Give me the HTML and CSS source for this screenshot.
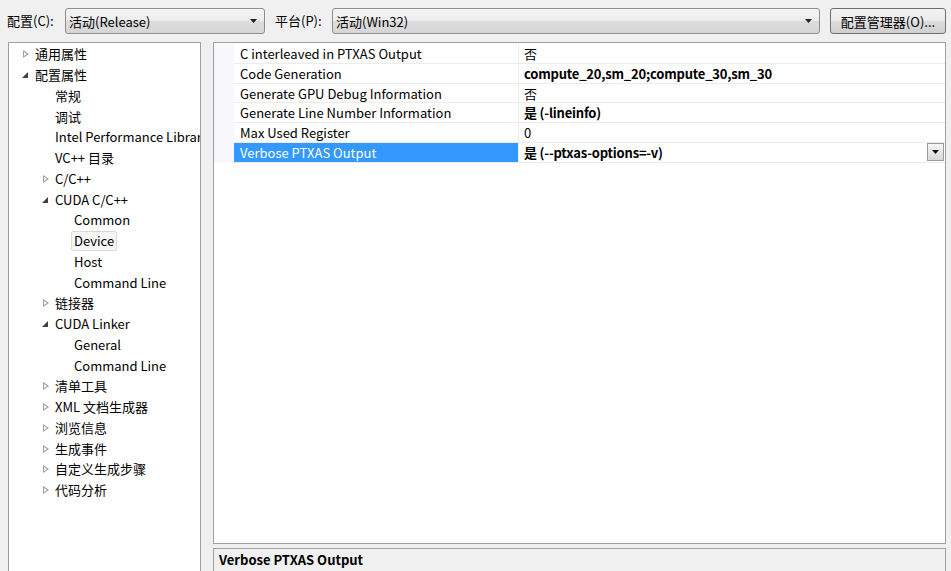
FILE: index.html
```html
<!DOCTYPE html>
<html lang="zh-CN">
<head>
<meta charset="utf-8">
<title>属性页</title>
<link rel="stylesheet" href="styles.css">
</head>
<body>
<div class="page">
  <div class="topbar">
    <span class="lbl lbl-cfg">配置(C):</span>
    <div class="combo combo-cfg"><span class="combo-text">活动(Release)</span><span class="combo-arrow"><svg width="7" height="4" viewBox="0 0 7 4"><path d="M0 0H7L3.5 4Z" fill="#222"/></svg></span></div>
    <span class="lbl lbl-plat">平台(P):</span>
    <div class="combo combo-plat"><span class="combo-text">活动(Win32)</span><span class="combo-arrow"><svg width="7" height="4" viewBox="0 0 7 4"><path d="M0 0H7L3.5 4Z" fill="#222"/></svg></span></div>
    <button class="btn">配置管理器(O)...</button>
  </div>
  <div class="main">
    <div class="tree">
      <div class="node l0"><span class="tw closed"></span>通用属性</div>
      <div class="node l0"><span class="tw open"></span>配置属性</div>
      <div class="node l1"><span class="tw"></span>常规</div>
      <div class="node l1"><span class="tw"></span>调试</div>
      <div class="node l1"><span class="tw"></span>Intel Performance Libraries</div>
      <div class="node l1"><span class="tw"></span>VC++ 目录</div>
      <div class="node l1"><span class="tw closed"></span>C/C++</div>
      <div class="node l1"><span class="tw open"></span>CUDA C/C++</div>
      <div class="node l2"><span class="tw"></span>Common</div>
      <div class="node l2"><span class="tw"></span><span class="sel">Device</span></div>
      <div class="node l2"><span class="tw"></span>Host</div>
      <div class="node l2"><span class="tw"></span>Command Line</div>
      <div class="node l1"><span class="tw closed"></span>链接器</div>
      <div class="node l1"><span class="tw open"></span>CUDA Linker</div>
      <div class="node l2"><span class="tw"></span>General</div>
      <div class="node l2"><span class="tw"></span>Command Line</div>
      <div class="node l1"><span class="tw closed"></span>清单工具</div>
      <div class="node l1"><span class="tw closed"></span>XML 文档生成器</div>
      <div class="node l1"><span class="tw closed"></span>浏览信息</div>
      <div class="node l1"><span class="tw closed"></span>生成事件</div>
      <div class="node l1"><span class="tw closed"></span>自定义生成步骤</div>
      <div class="node l1"><span class="tw closed"></span>代码分析</div>
    </div>
    <div class="right">
      <div class="grid">
        <div class="rows">
          <div class="row"><div class="gut"></div><div class="name">C interleaved in PTXAS Output</div><div class="val">否</div></div>
          <div class="row"><div class="gut"></div><div class="name">Code Generation</div><div class="val b">compute_20,sm_20;compute_30,sm_30</div></div>
          <div class="row"><div class="gut"></div><div class="name">Generate GPU Debug Information</div><div class="val">否</div></div>
          <div class="row"><div class="gut"></div><div class="name">Generate Line Number Information</div><div class="val b">是 (-lineinfo)</div></div>
          <div class="row"><div class="gut"></div><div class="name">Max Used Register</div><div class="val">0</div></div>
          <div class="row selrow"><div class="gut"></div><div class="name">Verbose PTXAS Output</div><div class="val b">是 (--ptxas-options=-v)<span class="dd"><svg width="7" height="4" viewBox="0 0 7 4"><path d="M0 0H7L3.5 4Z" fill="#111"/></svg></span></div></div>
        </div>
      </div>
      <div class="desc">Verbose PTXAS Output</div>
    </div>
  </div>
</div>
</body>
</html>
```
FILE: styles.css
```css
* { box-sizing: border-box; }
html, body { margin: 0; padding: 0; }
body {
  background: #f0f0f0;
  font-family: "Noto Sans CJK SC", "Noto Sans", sans-serif;
  font-size: 13px;
  color: #000;
  width: 951px;
  height: 571px;
  overflow: hidden;
}
.page { width: 951px; height: 571px; display: flex; flex-direction: column; }
.topbar {
  height: 42px;
  display: flex;
  align-items: flex-start;
  padding: 8px 0 0 7px;
}
.lbl { line-height: 25px; }
.lbl-cfg { width: 58px; }
.lbl-plat { width: 57px; margin-left: 10px; }
.combo {
  height: 26px;
  border: 1px solid #8e8f8f;
  border-radius: 3px;
  background: linear-gradient(#f4f4f4 0%, #ececec 48%, #dcdcdc 52%, #d6d6d6 100%);
  display: flex;
  align-items: center;
  padding-left: 3px;
}
.combo-cfg { width: 200px; }
.combo-plat { width: 488px; }
.combo-text { flex: 1; }
.combo-arrow { width: 18px; display: flex; align-items: center; justify-content: center; margin-right: 2px; }
.btn {
  margin-left: 10px;
  width: 116px;
  height: 26px;
  border: 1px solid #707070;
  border-radius: 3px;
  background: linear-gradient(#f2f2f2 0%, #ebebeb 48%, #dddddd 52%, #cfcfcf 100%);
  font-family: inherit;
  font-size: 13px;
  padding: 0;
  color: #000;
}
.main { flex: 1; display: flex; padding-left: 8px; min-height: 0; }
.tree {
  width: 193px;
  height: 540px;
  background: #fff;
  border: 1px solid #a0a0a0;
  border-bottom: none;
  padding-top: 1px;
  overflow: hidden;
  white-space: nowrap;
}
.node { height: 20.75px; line-height: 20px; display: flex; align-items: center; }
.l0 { padding-left: 10px; }
.l1 { padding-left: 30px; }
.l2 { padding-left: 49px; }
.tw { width: 16px; height: 20px; flex: none; position: relative; }
.tw.closed::before {
  content: "";
  position: absolute;
  left: 4px; top: 6px;
  border-left: 6px solid #a0a0a0;
  border-top: 4px solid transparent;
  border-bottom: 4px solid transparent;
}
.tw.closed::after {
  content: "";
  position: absolute;
  left: 5px; top: 8px;
  border-left: 3px solid #fff;
  border-top: 2px solid transparent;
  border-bottom: 2px solid transparent;
}
.tw.open::before {
  content: "";
  position: absolute;
  left: 3px; top: 7px;
  border-right: 6px solid #404040;
  border-top: 6px solid transparent;
}
.sel {
  border: 1px solid #d9d9d9;
  background: #f6f6f6;
  border-radius: 2px;
  padding: 0 2px;
  margin-left: -3px;
  line-height: 18px;
}
.right { width: 733px; margin-left: 12px; display: flex; flex-direction: column; }
.grid {
  height: 502px;
  background: #fff;
  border: 1px solid #a0a0a0;
  display: flex;
  padding-top: 1px;
}
.rows { flex: 1; display: flex; flex-direction: column; }
.row { height: 19.8px; display: flex; line-height: 19px; }
.gut { width: 20px; flex: none; background: #f8f8fc; }
.name { width: 285px; padding-left: 6px; border-right: 1px solid #ececec; border-bottom: 1px solid #ececec; white-space: nowrap; overflow: hidden; }
.val { flex: 1; padding-left: 5px; position: relative; white-space: nowrap; border-bottom: 1px solid #ececec; }
.b { font-weight: bold; letter-spacing: -0.2px; }
.selrow .name { background: #3399ff; color: #fff; }
.dd {
  position: absolute;
  right: 1px; top: 0;
  width: 17px; height: 18px;
  border: 1px solid #9a9a9a;
  background: linear-gradient(#f6f6f6, #d8d8d8);
  display: flex; align-items: center; justify-content: center;
}
.desc {
  margin-top: 4px;
  flex: 1;
  border: 1px solid #a0a0a0;
  border-bottom: none;
  background: #f0f0f0;
  font-weight: bold;
  padding: 1px 0 0 5px;
}
```
